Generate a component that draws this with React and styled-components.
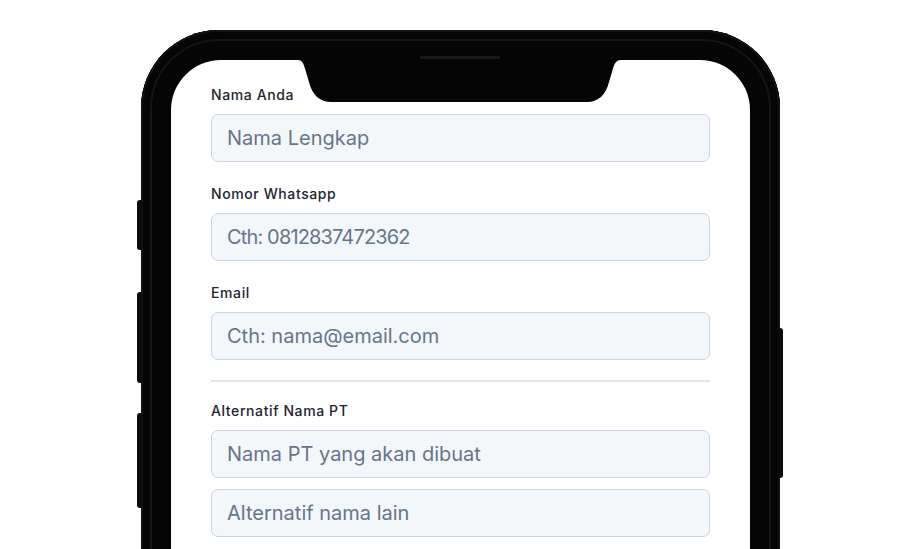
import React from 'react';
import styled, { createGlobalStyle } from 'styled-components';

const GlobalStyle = createGlobalStyle`
  html, body {
    margin: 0;
    padding: 0;
    background: #ffffff;
    overflow: hidden;
  }
  * {
    box-sizing: border-box;
  }
`;

const Page = styled.div`
  height: 549px;
  overflow: hidden;
  display: flex;
  justify-content: center;
  padding: 30px 0 0 9px;
  font-family: "Inter", "Noto Sans", sans-serif;
`;

const Phone = styled.div`
  position: relative;
  width: 639px;
  height: 720px;
  flex-shrink: 0;
  padding: 30px;
  background: #050505;
  border-radius: 78px;
  box-shadow:
    inset 0 0 0 2px #121212,
    inset 0 0 0 9px #050505,
    inset 0 0 0 11px #151515;
`;

const SideButton = styled.div`
  position: absolute;
  top: ${(p) => p.top}px;
  height: ${(p) => p.h}px;
  width: 5px;
  background: #0b0b0b;
  ${(p) =>
    p.right
      ? 'right: -3px; border-radius: 0 3px 3px 0;'
      : 'left: -4px; border-radius: 3px 0 0 3px;'}
`;

const Speaker = styled.div`
  position: absolute;
  top: 26px;
  left: 279px;
  width: 80px;
  height: 3px;
  border-radius: 2px;
  background: #1a1a1a;
  z-index: 3;
`;

const Screen = styled.div`
  position: relative;
  height: 100%;
  background: #ffffff;
  border-radius: 50px 50px 0 0;
  padding: 25px 40px 40px;
  overflow: hidden;
`;

const Notch = styled.svg`
  position: absolute;
  top: 0;
  left: 127px;
  z-index: 2;
`;

const Form = styled.div`
  display: flex;
  flex-direction: column;
  gap: 22px;
`;

const Field = styled.div`
  display: flex;
  flex-direction: column;
`;

const Label = styled.label`
  font-size: 14px;
  line-height: 20px;
  font-weight: 500;
  letter-spacing: 0.6px;
  color: #1e2430;
  margin-bottom: 9px;
`;

const InputStack = styled.div`
  display: flex;
  flex-direction: column;
  gap: 11px;
`;

const Input = styled.input`
  width: 100%;
  height: 48px;
  padding: 0 15px;
  border: 1px solid #cad3e7;
  border-radius: 7px;
  background: #f4f7f9;
  font-family: inherit;
  font-size: 20px;
  letter-spacing: ${(p) => (p.$tight ? '-0.85px' : '0')};
  color: #334155;
  outline: none;

  &::placeholder {
    color: #66758c;
  }
`;

const Divider = styled.hr`
  margin: -2px 0 -3px;
  border: none;
  height: 2px;
  background: #e1e6ee;
`;

const App = () => {
  return (
    <>
      <GlobalStyle />
      <Page>
        <Phone>
          <SideButton top={170} h={50} />
          <SideButton top={262} h={91} />
          <SideButton top={383} h={95} />
          <SideButton right top={298} h={150} />
          <Speaker />
          <Screen>
            <Notch width="323" height="42" viewBox="0 0 323 42">
              <path
                d="M0 0 H323 C317 0 316 5 314 12 L311 22 C308 35 300 42 289 42 H33 C22 42 14 35 11 22 L8 12 C6 5 5 0 0 0 Z"
                fill="#050505"
              />
            </Notch>
            <Form>
              <Field>
                <Label>Nama Anda</Label>
                <Input placeholder="Nama Lengkap" />
              </Field>
              <Field>
                <Label>Nomor Whatsapp</Label>
                <Input $tight placeholder="Cth: 0812837472362" />
              </Field>
              <Field>
                <Label>Email</Label>
                <Input placeholder="Cth: nama@email.com" />
              </Field>
              <Divider />
              <Field>
                <Label>Alternatif Nama PT</Label>
                <InputStack>
                  <Input placeholder="Nama PT yang akan dibuat" />
                  <Input placeholder="Alternatif nama lain" />
                </InputStack>
              </Field>
            </Form>
          </Screen>
        </Phone>
      </Page>
    </>
  );
};

export default App;
